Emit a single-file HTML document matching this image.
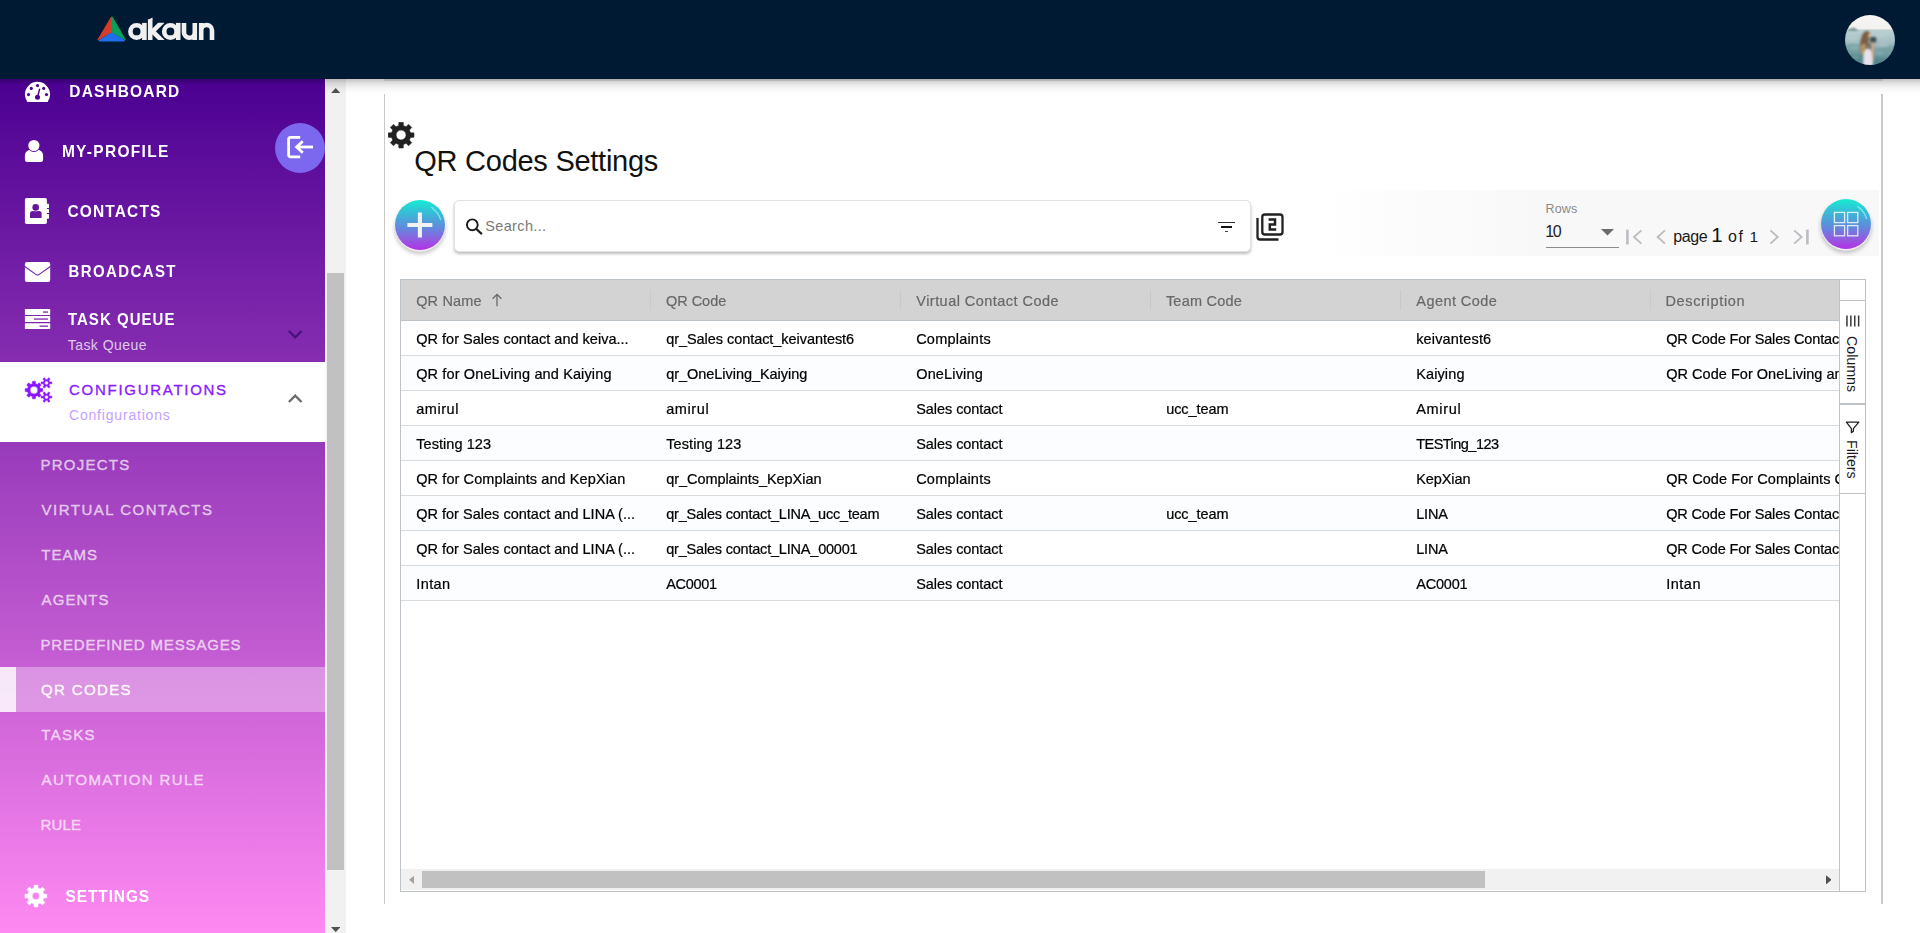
<!DOCTYPE html>
<html>
<head>
<meta charset="utf-8">
<title>QR Codes Settings</title>
<style>
*{box-sizing:border-box;margin:0;padding:0}
html,body{width:1920px;height:933px;overflow:hidden;background:#fff;font-family:"Liberation Sans",sans-serif;}
.abs{position:absolute}
.t{position:absolute;white-space:nowrap;line-height:1}
#hdr{position:absolute;left:0;top:0;width:1920px;height:79px;background:#011a34}
#side{position:absolute;left:0;top:79px;width:325px;height:854px;background:linear-gradient(180deg,#4b0091 0%,#fe89f2 100%)}
#sbar{position:absolute;left:325px;top:79px;width:21px;height:854px;background:#f1f1f1}
.cell{position:absolute;white-space:nowrap;line-height:1;font-size:14.5px;color:#000}
</style>
</head>
<body>

<div id="hdr">
  <svg class="abs" style="left:96px;top:14px" width="32" height="30" viewBox="0 0 32 30">
    <path d="M15.4 3.2 L2.2 25.6 L15.4 18.2 Z" fill="#d63c2a" stroke="#d63c2a" stroke-width="1.2" stroke-linejoin="round"/>
    <path d="M16.2 3.2 L29 25.6 L16.2 18.2 Z" fill="#0aa25a" stroke="#0aa25a" stroke-width="1.2" stroke-linejoin="round"/>
    <path d="M15.8 19.2 L3.4 26.6 L28 26.6 Z" fill="#1e6fea" stroke="#1e6fea" stroke-width="1.6" stroke-linejoin="round"/>
  </svg>
  <svg class="abs" style="left:128px;top:16px" width="90" height="26" viewBox="0 0 90 26" fill="none" stroke="#f0f0f0" stroke-width="4.6">
    <circle cx="8.6" cy="15.4" r="6.2"/><path d="M16.4 6.9 V24"/>
    <path d="M22.2 24 V3.4"/><path d="M19.9 4 L24.5 1.6 V4 Z" fill="#f0f0f0" stroke="none"/><clipPath id="kclip"><rect x="18" y="6.75" width="20" height="17.2"/></clipPath><path clip-path="url(#kclip)" d="M35 5.2 L24.6 15.4 L35.4 26"/>
    <circle cx="42.4" cy="15.4" r="6.2"/><path d="M50.2 6.9 V24"/>
    <path d="M56 6.9 V16.4 a5.4 5.4 0 0 0 10.8 0 V6.9 M66.8 14 V24"/>
    <path d="M73.2 24 V6.9 M73.2 14.4 a5.4 5.4 0 0 1 10.8 0 V24"/>
  </svg>
  <svg class="abs" style="left:1845px;top:15px" width="50" height="50" viewBox="0 0 50 50">
    <defs>
      <clipPath id="avc"><circle cx="25" cy="25" r="25"/></clipPath>
      <linearGradient id="avsky" x1="0" y1="0" x2="0" y2="1"><stop offset="0" stop-color="#f8f7f5"/><stop offset=".27" stop-color="#f3f1ee"/><stop offset=".305" stop-color="#bcd0d2"/><stop offset=".5" stop-color="#a9c2c6"/><stop offset=".75" stop-color="#8fb0b4"/><stop offset="1" stop-color="#6b989c"/></linearGradient>
      <filter id="avb" x="-20%" y="-20%" width="140%" height="140%"><feGaussianBlur stdDeviation=".7"/></filter>
    </defs>
    <g clip-path="url(#avc)">
      <rect width="50" height="50" fill="url(#avsky)"/>
      <g style="filter:blur(0.8px)">
        <path d="M-2 30 Q10 27 22 31 T52 29 V52 H-2 Z" fill="rgba(70,125,130,.35)"/>
        <path d="M-2 40 Q14 37 26 41 T52 39 V52 H-2 Z" fill="rgba(60,115,120,.35)"/>
        <path d="M3 24 h7 M30 21 h9 M34 30 h8 M6 33 h8 M31 38 h7 M8 42 h6" stroke="rgba(235,245,245,.35)" stroke-width="1" fill="none"/>
        <path d="M2.2 15.4 Q3.6 13.4 6.4 13.8 Q8.6 12.4 10.6 13.7 L13.2 15.5 Z" fill="#5f7b7b"/>
        <path d="M15.2 37 Q14.4 28 16.6 21.5 Q18.4 16 21.6 15.9 Q24.8 16.2 25.2 19 L24 24 Q23.4 30 22.6 36 Q20 40.4 17 39.6 Z" fill="#7a5f45"/>
        <path d="M15.4 31 Q15.6 36 15.8 38.6 Q18 40.4 20.6 39 L21 30 Q18 27 15.4 31 Z" fill="#b3946a"/>
        <ellipse cx="24.7" cy="20.4" rx="1.6" ry="2.2" fill="#d6b59c"/>
        <rect x="25" y="22" width="6.3" height="5.6" rx="1.5" fill="#3d4c52"/>
        <path d="M25.6 27.2 L29.6 27.4 L29.2 36 Q28.8 42 28.6 46 L25.6 46 Z" fill="#c6a48e"/>
        <rect x="24" y="28" width="1.7" height="8.6" fill="#52625f"/>
        <path d="M18.2 51 L18.4 40 Q19 34.6 22.4 33.5 L25.2 34.2 Q27 37 27.2 41 L28.2 51 Z" fill="#e7e2eb"/>
      </g>
    </g>
  </svg>
</div>

<div id="side">
<div class="abs" style="left:0;top:0;width:325px;height:6px;background:linear-gradient(180deg,rgba(0,0,0,.25),rgba(0,0,0,0))"></div>
<div class="abs" style="left:0;top:283px;width:325px;height:80px;background:#fff"></div>
<div class="abs" style="left:0;top:588px;width:325px;height:45px;background:rgba(255,255,255,.33)"></div>
<div class="abs" style="left:0;top:588px;width:16px;height:45px;background:rgba(255,255,255,.78)"></div>
</div>
<span class="t" style="left:69.30px;top:84px;font-size:15.5px;letter-spacing:1.143px;color:#fff;font-weight:bold;transform:scaleY(1.06);transform-origin:0 13px;">DASHBOARD</span>
<span class="t" style="left:61.90px;top:144px;font-size:15.5px;letter-spacing:1.290px;color:#fff;font-weight:bold;transform:scaleY(1.06);transform-origin:0 13px;">MY-PROFILE</span>
<span class="t" style="left:67.40px;top:204px;font-size:15.5px;letter-spacing:1.155px;color:#fff;font-weight:bold;transform:scaleY(1.06);transform-origin:0 13px;">CONTACTS</span>
<span class="t" style="left:68.50px;top:264px;font-size:15px;letter-spacing:1.392px;color:#fff;font-weight:bold;transform:scaleY(1.06);transform-origin:0 13px;">BROADCAST</span>
<span class="t" style="left:67.90px;top:312px;font-size:15px;letter-spacing:1.042px;color:#fff;font-weight:bold;transform:scaleY(1.06);transform-origin:0 13px;">TASK QUEUE</span>
<span class="t" style="left:67.70px;top:338px;font-size:14px;letter-spacing:0.464px;color:rgba(255,255,255,.76);font-weight:normal;">Task Queue</span>
<span class="t" style="left:69.00px;top:382px;font-size:15px;letter-spacing:1.722px;color:#8a1cff;font-weight:normal;-webkit-text-stroke:.35px #8a1cff;">CONFIGURATIONS</span>
<span class="t" style="left:69.00px;top:408px;font-size:14px;letter-spacing:0.810px;color:#c6a0ff;font-weight:normal;">Configurations</span>
<span class="t" style="left:40.40px;top:457px;font-size:15px;letter-spacing:1.271px;color:rgba(255,255,255,.64);font-weight:normal;-webkit-text-stroke:.4px rgba(255,255,255,.64);">PROJECTS</span>
<span class="t" style="left:41.60px;top:502px;font-size:15px;letter-spacing:1.485px;color:rgba(255,255,255,.64);font-weight:normal;-webkit-text-stroke:.4px rgba(255,255,255,.64);">VIRTUAL CONTACTS</span>
<span class="t" style="left:41.30px;top:547px;font-size:15px;letter-spacing:1.033px;color:rgba(255,255,255,.64);font-weight:normal;-webkit-text-stroke:.4px rgba(255,255,255,.64);">TEAMS</span>
<span class="t" style="left:41.60px;top:592px;font-size:15px;letter-spacing:1.066px;color:rgba(255,255,255,.64);font-weight:normal;-webkit-text-stroke:.4px rgba(255,255,255,.64);">AGENTS</span>
<span class="t" style="left:40.40px;top:637px;font-size:15px;letter-spacing:0.843px;color:rgba(255,255,255,.64);font-weight:normal;-webkit-text-stroke:.4px rgba(255,255,255,.64);">PREDEFINED MESSAGES</span>
<span class="t" style="left:40.90px;top:682px;font-size:15px;letter-spacing:1.385px;color:rgba(255,255,255,.95);font-weight:normal;-webkit-text-stroke:.4px rgba(255,255,255,.95);">QR CODES</span>
<span class="t" style="left:41.30px;top:727px;font-size:15px;letter-spacing:1.309px;color:rgba(255,255,255,.64);font-weight:normal;-webkit-text-stroke:.4px rgba(255,255,255,.64);">TASKS</span>
<span class="t" style="left:41.60px;top:772px;font-size:15px;letter-spacing:1.372px;color:rgba(255,255,255,.64);font-weight:normal;-webkit-text-stroke:.4px rgba(255,255,255,.64);">AUTOMATION RULE</span>
<span class="t" style="left:40.40px;top:817px;font-size:15px;letter-spacing:0.231px;color:rgba(255,255,255,.64);font-weight:normal;-webkit-text-stroke:.4px rgba(255,255,255,.64);">RULE</span>
<span class="t" style="left:65.60px;top:889px;font-size:15.5px;letter-spacing:0.862px;color:#fff;font-weight:bold;transform:scaleY(1.06);transform-origin:0 13px;">SETTINGS</span>
<svg class="abs" style="left:24px;top:81px" width="28" height="22" viewBox="0 0 28 22">
<mask id="mdash"><rect width="28" height="22" fill="#000"/><path d="M3.4 21 A12.6 12.6 0 1 1 23.6 21 Z" fill="#fff"/>
<circle cx="13.5" cy="4.6" r="1.55" fill="#000"/><circle cx="7.3" cy="7.4" r="1.55" fill="#000"/><circle cx="19.7" cy="7.4" r="1.55" fill="#000"/><circle cx="4.5" cy="13.6" r="1.55" fill="#000"/><circle cx="22.5" cy="13.6" r="1.55" fill="#000"/>
<circle cx="13.5" cy="16.3" r="2.5" fill="#000"/><path d="M13.5 16.3 L15.6 8.2" stroke="#000" stroke-width="1.4" stroke-linecap="round"/></mask>
<rect width="28" height="22" fill="#fff" mask="url(#mdash)"/></svg>
<svg class="abs" style="left:24px;top:139px" width="21" height="24" viewBox="0 0 21 24">
<mask id="muser"><rect width="21" height="24" fill="#000"/><path d="M0.9 20.5 V16.3 A5.5 5.5 0 0 1 6.4 10.8 H13.6 A5.5 5.5 0 0 1 19.1 16.3 V20.5 A2.5 2.5 0 0 1 16.6 23 H3.4 A2.5 2.5 0 0 1 0.9 20.5 Z" fill="#fff"/><circle cx="9.9" cy="6.5" r="6.5" fill="#000"/><circle cx="9.9" cy="6.5" r="5.6" fill="#fff"/></mask>
<rect width="21" height="24" fill="#fff" mask="url(#muser)"/></svg>
<svg class="abs" style="left:24px;top:197px" width="26" height="28" viewBox="0 0 26 28">
<mask id="mbook"><rect width="26" height="28" fill="#000"/><rect x="0.9" y="1.1" width="22" height="25.9" rx="1.7" fill="#fff"/>
<rect x="22" y="6.8" width="3" height="4.3" rx=".6" fill="#fff"/><rect x="22" y="11.9" width="3" height="4.2" rx=".6" fill="#fff"/><rect x="22" y="16.9" width="3" height="4.9" rx=".6" fill="#fff"/>
<path d="M6 20.9 V16.6 A2.5 2.5 0 0 1 8.5 14.1 H15.1 A2.5 2.5 0 0 1 17.6 16.6 V20.9 Z" fill="#000"/><circle cx="11.7" cy="10.4" r="3.9" fill="#fff"/><circle cx="11.7" cy="10.4" r="3.3" fill="#000"/></mask>
<rect width="26" height="28" fill="#fff" mask="url(#mbook)"/></svg>
<svg class="abs" style="left:24px;top:261px" width="27" height="22" viewBox="0 0 27 22">
<mask id="menv"><rect width="27" height="22" fill="#000"/><rect x="0.9" y="0.9" width="25.3" height="20.1" rx="2" fill="#fff"/><path d="M0.4 5.2 L12.2 13.6 Q13.5 14.5 14.8 13.6 L26.7 5.2" fill="none" stroke="#000" stroke-width="1.1"/></mask>
<rect width="27" height="22" fill="#fff" mask="url(#menv)"/></svg>
<svg class="abs" style="left:24px;top:308px" width="27" height="22" viewBox="0 0 27 22">
<mask id="msrv"><rect width="27" height="22" fill="#000"/><rect x="0.9" y="1.1" width="25.3" height="5.8" rx=".5" fill="#fff"/><rect x="0.9" y="8.1" width="25.3" height="5.9" rx=".5" fill="#fff"/><rect x="0.9" y="15.2" width="25.3" height="5.9" rx=".5" fill="#fff"/>
<rect x="19" y="3.4" width="5" height="1.3" fill="#000"/><rect x="9.9" y="10.4" width="14.1" height="1.3" fill="#000"/><rect x="15.5" y="17.5" width="8.5" height="1.3" fill="#000"/></mask>
<rect width="27" height="22" fill="#fff" mask="url(#msrv)"/></svg>
<svg class="abs" style="left:286px;top:328px" width="18" height="13" viewBox="0 0 18 13"><path d="M2.9 3 L9.2 9.3 L15.5 3" fill="none" stroke="#47127a" stroke-width="2.3"/></svg>
<svg class="abs" style="left:286px;top:392px" width="18" height="13" viewBox="0 0 18 13"><path d="M2.9 10 L9.2 3.7 L15.5 10" fill="none" stroke="#6a6a6a" stroke-width="2.3"/></svg>
<svg class="abs" style="left:24px;top:376px" width="30" height="28" viewBox="0 0 30 28"><path fill="#8a14ff" fill-rule="evenodd" stroke="#8a14ff" stroke-width=".5" stroke-linejoin="round" d="M16.36 12.48 L18.73 12.61 L18.73 15.53 L16.36 15.66 L15.60 17.47 L17.19 19.24 L15.12 21.31 L13.35 19.72 L11.54 20.48 L11.41 22.85 L8.49 22.85 L8.36 20.48 L6.55 19.72 L4.78 21.31 L2.71 19.24 L4.30 17.47 L3.54 15.66 L1.17 15.53 L1.17 12.61 L3.54 12.48 L4.30 10.67 L2.71 8.90 L4.78 6.83 L6.55 8.42 L8.36 7.66 L8.49 5.29 L11.41 5.29 L11.54 7.66 L13.35 8.42 L15.12 6.83 L17.19 8.90 L15.60 10.67 Z M13.85 14.07 A3.9 3.9 0 1 0 6.05 14.07 A3.9 3.9 0 1 0 13.85 14.07 Z M25.66 5.95 L27.91 5.93 L27.91 7.87 L25.66 7.85 L24.91 9.16 L26.05 11.10 L24.36 12.07 L23.25 10.11 L21.75 10.11 L20.64 12.07 L18.95 11.10 L20.09 9.16 L19.34 7.85 L17.09 7.87 L17.09 5.93 L19.34 5.95 L20.09 4.64 L18.95 2.70 L20.64 1.73 L21.75 3.69 L23.25 3.69 L24.36 1.73 L26.05 2.70 L24.91 4.64 Z M24.40 6.90 A1.9 1.9 0 1 0 20.60 6.90 A1.9 1.9 0 1 0 24.40 6.90 Z M25.66 20.15 L27.91 20.13 L27.91 22.07 L25.66 22.05 L24.91 23.36 L26.05 25.30 L24.36 26.27 L23.25 24.31 L21.75 24.31 L20.64 26.27 L18.95 25.30 L20.09 23.36 L19.34 22.05 L17.09 22.07 L17.09 20.13 L19.34 20.15 L20.09 18.84 L18.95 16.90 L20.64 15.93 L21.75 17.89 L23.25 17.89 L24.36 15.93 L26.05 16.90 L24.91 18.84 Z M24.40 21.10 A1.9 1.9 0 1 0 20.60 21.10 A1.9 1.9 0 1 0 24.40 21.10 Z"/></svg>
<svg class="abs" style="left:24px;top:884px" width="24" height="24" viewBox="0 0 24 24"><path fill="#fff" fill-rule="evenodd" stroke="#fff" stroke-width=".5" stroke-linejoin="round" d="M19.86 10.07 L22.85 10.23 L22.85 13.87 L19.86 14.03 L18.93 16.28 L20.93 18.50 L18.35 21.08 L16.13 19.08 L13.88 20.01 L13.72 23.00 L10.08 23.00 L9.92 20.01 L7.67 19.08 L5.45 21.08 L2.87 18.50 L4.87 16.28 L3.94 14.03 L0.95 13.87 L0.95 10.23 L3.94 10.07 L4.87 7.82 L2.87 5.60 L5.45 3.02 L7.67 5.02 L9.92 4.09 L10.08 1.10 L13.72 1.10 L13.88 4.09 L16.13 5.02 L18.35 3.02 L20.93 5.60 L18.93 7.82 Z M15.60 12.05 A3.7 3.7 0 1 0 8.20 12.05 A3.7 3.7 0 1 0 15.60 12.05 Z"/></svg>
<div class="abs" style="left:275px;top:123px;width:50px;height:50px;border-radius:50%;background:#7b68ee"></div>
<svg class="abs" style="left:275px;top:123px" width="50" height="50" viewBox="0 0 50 50" fill="none" stroke="#fff" stroke-width="2.8">
<path d="M25.2 14.3 H15.6 Q13.6 14.3 13.6 16.3 V31.8 Q13.6 33.8 15.6 33.8 H25.2" stroke-linecap="butt"/>
<path d="M38 24 H21.5"/><path d="M27.8 18.2 L21.6 24 L27.8 29.8"/></svg>
<div id="sbar">
  <div class="abs" style="left:0;top:0;width:1px;height:854px;background:#fbfbfb"></div>
  <div class="abs" style="left:2px;top:194px;width:17px;height:597px;background:#c1c1c1"></div>
  <svg class="abs" style="left:5.8px;top:8.8px" width="9.4" height="5.2" viewBox="0 0 11 6"><path d="M0 6 L5.5 0 L11 6 Z" fill="#505050"/></svg>
  <svg class="abs" style="left:5.8px;top:848px" width="9.4" height="5.2" viewBox="0 0 11 6"><path d="M0 0 L5.5 6 L11 0 Z" fill="#505050"/></svg>
</div>

<div class="abs" style="left:325px;top:79px;width:1595px;height:15px;background:linear-gradient(180deg,rgba(0,0,0,.24) 0,rgba(0,0,0,.12) 4px,rgba(0,0,0,.04) 9px,rgba(0,0,0,0) 15px)"></div>
<div class="abs" style="left:384px;top:79px;width:1499px;height:2px;background:rgba(0,0,0,.1)"></div>
<div class="abs" style="left:384px;top:94px;width:1px;height:810px;background:#c9c9c9"></div>
<div class="abs" style="left:1881px;top:94px;width:2px;height:810px;background:#c9c9c9"></div>
<svg class="abs" style="left:388px;top:122px" width="27" height="27" viewBox="0 0 27 27"><path fill="#212121" fill-rule="evenodd" stroke="#212121" stroke-width=".6" stroke-linejoin="round" d="M22.46 10.71 L25.97 10.90 L25.97 15.20 L22.46 15.39 L21.36 18.05 L23.71 20.67 L20.67 23.71 L18.05 21.36 L15.39 22.46 L15.20 25.97 L10.90 25.97 L10.71 22.46 L8.05 21.36 L5.43 23.71 L2.39 20.67 L4.74 18.05 L3.64 15.39 L0.13 15.20 L0.13 10.90 L3.64 10.71 L4.74 8.05 L2.39 5.43 L5.43 2.39 L8.05 4.74 L10.71 3.64 L10.90 0.13 L15.20 0.13 L15.39 3.64 L18.05 4.74 L20.67 2.39 L23.71 5.43 L21.36 8.05 Z M18.05 13.05 A5.0 5.0 0 1 0 8.05 13.05 A5.0 5.0 0 1 0 18.05 13.05 Z"/></svg>
<span class="t" style="left:414.34px;top:147px;font-size:29px;letter-spacing:-0.266px;color:#111;font-weight:normal;">QR Codes Settings</span>
<div class="abs" style="left:1315px;top:190px;width:564px;height:66px;background:linear-gradient(90deg,rgba(248,248,248,0) 0,#f8f8f8 220px)"></div>
<div class="abs" style="left:395px;top:200px;width:50px;height:50px;border-radius:50%;background:linear-gradient(180deg,#14ecd2 0%,#3fb4d8 30%,#5f8bdc 55%,#8f5fe0 78%,#b42fe6 100%);box-shadow:0 1.4px 0 .4px #f3ecf6,0 3.5px 4px .5px rgba(0,0,0,.23)"></div><svg class="abs" style="left:395px;top:200px" width="50" height="50" viewBox="0 0 50 50"><path d="M36.8 7.6 Q43.6 12.6 45.6 19.6" fill="none" stroke="rgba(140,250,245,.7)" stroke-width="1.4" stroke-linecap="round"/></svg>
<svg class="abs" style="left:395px;top:200px" width="50" height="50" viewBox="0 0 50 50"><path d="M12.4 25 H37.4 M24.9 12.4 V37.6" stroke="#f2f2f2" stroke-width="4.1" fill="none"/></svg>
<div class="abs" style="left:453.5px;top:199.5px;width:797px;height:52px;border-radius:5px;background:#fff;border:1px solid #e2e2e2;box-shadow:0 2px 3px rgba(0,0,0,.26)"></div>
<svg class="abs" style="left:463px;top:215px" width="22" height="22" viewBox="0 0 22 22" fill="none" stroke="#1c1c1c"><circle cx="9.3" cy="9.8" r="5.4" stroke-width="1.9"/><path d="M13.2 13.9 L18.9 19.1" stroke-width="2.1"/></svg>
<span class="t" style="left:485.20px;top:219px;font-size:14.5px;letter-spacing:0.363px;color:#7a7a7a;font-weight:normal;">Search...</span>
<div class="abs" style="left:1218px;top:221.6px;width:17px;height:1.6px;background:#333"></div>
<div class="abs" style="left:1221px;top:226.2px;width:11px;height:1.7px;background:#111"></div>
<div class="abs" style="left:1224.8px;top:230.9px;width:3.5px;height:1.6px;background:#444"></div>
<svg class="abs" style="left:1254px;top:211px" width="32" height="32" viewBox="0 0 32 32" fill="none" stroke="#212121" stroke-width="2.3">
<rect x="8.3" y="3.5" width="20.2" height="20" rx="2.6"/>
<path d="M3.5 7 V26 Q3.5 28.5 6 28.5 H24.5"/>
<path d="M14.6 8.4 H21 V13.6 H15.8 V18.6 H22.2" stroke-width="2.5"/></svg>
<span class="t" style="left:1545.40px;top:203px;font-size:12.5px;letter-spacing:0.231px;color:#8a8a8a;font-weight:normal;">Rows</span>
<span class="t" style="left:1545.20px;top:224px;font-size:16px;letter-spacing:-1.398px;color:#222;font-weight:normal;">10</span>
<svg class="abs" style="left:1601px;top:229px" width="13" height="7" viewBox="0 0 13 7"><path d="M0 0 H13 L6.5 6.6 Z" fill="#6a6a6a"/></svg>
<div class="abs" style="left:1546px;top:247px;width:73px;height:1px;background:#8c8c8c"></div>
<svg class="abs" style="left:1624px;top:227px" width="190" height="20" viewBox="0 0 190 20" fill="none" stroke="#bcbcc2" stroke-width="1.9"><path d="M3.4 2.6 V17.4" stroke-width="2.6"/><path d="M17.4 3.4 L10 10 L17.4 16.6"/><path d="M41 3.4 L33.6 10 L41 16.6"/><path d="M146.4 3.4 L153.8 10 L146.4 16.6"/><path d="M170.2 3.4 L177.6 10 L170.2 16.6"/><path d="M183.4 2.6 V17.4" stroke-width="2.6"/></svg>
<span class="t" style="left:1673.20px;top:229px;font-size:16px;letter-spacing:-0.365px;color:#1a1a1a;font-weight:normal;">page</span>
<span class="t" style="left:1711.20px;top:225px;font-size:20.5px;letter-spacing:0.000px;color:#111;font-weight:normal;">1</span>
<span class="t" style="left:1728.00px;top:229px;font-size:16px;letter-spacing:1.502px;color:#1a1a1a;font-weight:normal;">of</span>
<span class="t" style="left:1749.60px;top:229px;font-size:15.5px;letter-spacing:0.000px;color:#1a1a1a;font-weight:normal;">1</span>
<div class="abs" style="left:1821px;top:199px;width:50px;height:50px;border-radius:50%;background:linear-gradient(180deg,#14ecd2 0%,#3fb4d8 30%,#5f8bdc 55%,#8f5fe0 78%,#b42fe6 100%);box-shadow:0 1.4px 0 .4px #f3ecf6,0 3.5px 4px .5px rgba(0,0,0,.23)"></div><svg class="abs" style="left:1821px;top:199px" width="50" height="50" viewBox="0 0 50 50"><path d="M36.8 7.6 Q43.6 12.6 45.6 19.6" fill="none" stroke="rgba(140,250,245,.7)" stroke-width="1.4" stroke-linecap="round"/></svg>
<svg class="abs" style="left:1821px;top:199px" width="50" height="50" viewBox="0 0 50 50" fill="none" stroke="rgba(255,255,255,.82)" stroke-width="1.3"><rect x="13.4" y="13.4" width="10.2" height="10.2"/><rect x="26.6" y="13.4" width="10.2" height="10.2"/><rect x="13.4" y="26.6" width="10.2" height="10.2"/><rect x="26.6" y="26.6" width="10.2" height="10.2"/></svg>
<div class="abs" style="left:400px;top:279px;width:1466px;height:613px;border:1px solid #bdc3c7;background:#fff"></div>
<div class="abs" style="left:401px;top:280px;width:1438px;height:41px;background:#d3d3d3;border-bottom:1px solid #bdc3c7"></div>
<div class="abs" style="left:401px;top:321px;width:1438px;height:35px;background:#fff;border-bottom:1px solid #d9dcde"></div>
<div class="abs" style="left:401px;top:356px;width:1438px;height:35px;background:#fcfdfe;border-bottom:1px solid #d9dcde"></div>
<div class="abs" style="left:401px;top:391px;width:1438px;height:35px;background:#fff;border-bottom:1px solid #d9dcde"></div>
<div class="abs" style="left:401px;top:426px;width:1438px;height:35px;background:#fcfdfe;border-bottom:1px solid #d9dcde"></div>
<div class="abs" style="left:401px;top:461px;width:1438px;height:35px;background:#fff;border-bottom:1px solid #d9dcde"></div>
<div class="abs" style="left:401px;top:496px;width:1438px;height:35px;background:#fcfdfe;border-bottom:1px solid #d9dcde"></div>
<div class="abs" style="left:401px;top:531px;width:1438px;height:35px;background:#fff;border-bottom:1px solid #d9dcde"></div>
<div class="abs" style="left:401px;top:566px;width:1438px;height:35px;background:#fcfdfe;border-bottom:1px solid #d9dcde"></div>
<div class="abs" style="left:650px;top:290px;width:1px;height:20px;background:rgba(189,195,199,.55)"></div>
<div class="abs" style="left:900px;top:290px;width:1px;height:20px;background:rgba(189,195,199,.55)"></div>
<div class="abs" style="left:1150px;top:290px;width:1px;height:20px;background:rgba(189,195,199,.55)"></div>
<div class="abs" style="left:1400px;top:290px;width:1px;height:20px;background:rgba(189,195,199,.55)"></div>
<div class="abs" style="left:1650px;top:290px;width:1px;height:20px;background:rgba(189,195,199,.55)"></div>
<span class="t" style="left:416.20px;top:294px;font-size:14.5px;letter-spacing:0.151px;color:#686868;font-weight:normal;transform:scaleY(1.07);transform-origin:0 12px;-webkit-text-stroke:.2px #686868;">QR Name</span>
<span class="t" style="left:665.90px;top:294px;font-size:14.5px;letter-spacing:-0.013px;color:#686868;font-weight:normal;transform:scaleY(1.07);transform-origin:0 12px;-webkit-text-stroke:.2px #686868;">QR Code</span>
<span class="t" style="left:916.30px;top:294px;font-size:14.5px;letter-spacing:0.460px;color:#686868;font-weight:normal;transform:scaleY(1.07);transform-origin:0 12px;-webkit-text-stroke:.2px #686868;">Virtual Contact Code</span>
<span class="t" style="left:1165.90px;top:294px;font-size:14.5px;letter-spacing:0.214px;color:#686868;font-weight:normal;transform:scaleY(1.07);transform-origin:0 12px;-webkit-text-stroke:.2px #686868;">Team Code</span>
<span class="t" style="left:1416.30px;top:294px;font-size:14.5px;letter-spacing:0.431px;color:#686868;font-weight:normal;transform:scaleY(1.07);transform-origin:0 12px;-webkit-text-stroke:.2px #686868;">Agent Code</span>
<span class="t" style="left:1665.40px;top:294px;font-size:14.5px;letter-spacing:0.674px;color:#686868;font-weight:normal;transform:scaleY(1.07);transform-origin:0 12px;-webkit-text-stroke:.2px #686868;">Description</span>
<svg class="abs" style="left:490.6px;top:293px" width="12" height="14" viewBox="0 0 12 14" fill="none" stroke="#686868" stroke-width="1.3"><path d="M6 13.2 V1.6 M1.6 5.8 L6 1.4 L10.4 5.8"/></svg>
<div class="abs" style="left:401px;top:321px;width:1438px;height:290px;overflow:hidden">
<div class="abs" style="left:-401px;top:-321px"><span class="t" style="left:416.20px;top:332px;font-size:14.5px;letter-spacing:0.015px;color:#000;font-weight:normal;transform:scaleY(1.07);transform-origin:0 12px;-webkit-text-stroke:.22px #000;">QR for Sales contact and keiva...</span></div>
<div class="abs" style="left:-401px;top:-321px"><span class="t" style="left:666.20px;top:332px;font-size:14.5px;letter-spacing:-0.054px;color:#000;font-weight:normal;transform:scaleY(1.07);transform-origin:0 12px;-webkit-text-stroke:.22px #000;">qr_Sales contact_keivantest6</span></div>
<div class="abs" style="left:-401px;top:-321px"><span class="t" style="left:916.20px;top:332px;font-size:14.5px;letter-spacing:0.214px;color:#000;font-weight:normal;transform:scaleY(1.07);transform-origin:0 12px;-webkit-text-stroke:.22px #000;">Complaints</span></div>
<div class="abs" style="left:-401px;top:-321px"><span class="t" style="left:1416.20px;top:332px;font-size:14.5px;letter-spacing:0.161px;color:#000;font-weight:normal;transform:scaleY(1.07);transform-origin:0 12px;-webkit-text-stroke:.22px #000;">keivantest6</span></div>
<div class="abs" style="left:-401px;top:-321px"><span class="t" style="left:1666.20px;top:332px;font-size:14.5px;letter-spacing:0.000px;color:#000;font-weight:normal;letter-spacing:-0.15px;transform:scaleY(1.07);transform-origin:0 12px;-webkit-text-stroke:.22px #000;">QR Code For Sales Contact and keivantest6</span></div>
<div class="abs" style="left:-401px;top:-321px"><span class="t" style="left:416.20px;top:367px;font-size:14.5px;letter-spacing:0.127px;color:#000;font-weight:normal;transform:scaleY(1.07);transform-origin:0 12px;-webkit-text-stroke:.22px #000;">QR for OneLiving and Kaiying</span></div>
<div class="abs" style="left:-401px;top:-321px"><span class="t" style="left:666.20px;top:367px;font-size:14.5px;letter-spacing:-0.042px;color:#000;font-weight:normal;transform:scaleY(1.07);transform-origin:0 12px;-webkit-text-stroke:.22px #000;">qr_OneLiving_Kaiying</span></div>
<div class="abs" style="left:-401px;top:-321px"><span class="t" style="left:916.20px;top:367px;font-size:14.5px;letter-spacing:0.159px;color:#000;font-weight:normal;transform:scaleY(1.07);transform-origin:0 12px;-webkit-text-stroke:.22px #000;">OneLiving</span></div>
<div class="abs" style="left:-401px;top:-321px"><span class="t" style="left:1416.20px;top:367px;font-size:14.5px;letter-spacing:0.118px;color:#000;font-weight:normal;transform:scaleY(1.07);transform-origin:0 12px;-webkit-text-stroke:.22px #000;">Kaiying</span></div>
<div class="abs" style="left:-401px;top:-321px"><span class="t" style="left:1666.20px;top:367px;font-size:14.5px;letter-spacing:0.000px;color:#000;font-weight:normal;letter-spacing:0.03px;transform:scaleY(1.07);transform-origin:0 12px;-webkit-text-stroke:.22px #000;">QR Code For OneLiving and Kaiying</span></div>
<div class="abs" style="left:-401px;top:-321px"><span class="t" style="left:416.20px;top:402px;font-size:14.5px;letter-spacing:0.549px;color:#000;font-weight:normal;transform:scaleY(1.07);transform-origin:0 12px;-webkit-text-stroke:.22px #000;">amirul</span></div>
<div class="abs" style="left:-401px;top:-321px"><span class="t" style="left:666.20px;top:402px;font-size:14.5px;letter-spacing:0.589px;color:#000;font-weight:normal;transform:scaleY(1.07);transform-origin:0 12px;-webkit-text-stroke:.22px #000;">amirul</span></div>
<div class="abs" style="left:-401px;top:-321px"><span class="t" style="left:916.20px;top:402px;font-size:14.5px;letter-spacing:-0.060px;color:#000;font-weight:normal;transform:scaleY(1.07);transform-origin:0 12px;-webkit-text-stroke:.22px #000;">Sales contact</span></div>
<div class="abs" style="left:-401px;top:-321px"><span class="t" style="left:1166.20px;top:402px;font-size:14.5px;letter-spacing:-0.069px;color:#000;font-weight:normal;transform:scaleY(1.07);transform-origin:0 12px;-webkit-text-stroke:.22px #000;">ucc_team</span></div>
<div class="abs" style="left:-401px;top:-321px"><span class="t" style="left:1416.20px;top:402px;font-size:14.5px;letter-spacing:0.707px;color:#000;font-weight:normal;transform:scaleY(1.07);transform-origin:0 12px;-webkit-text-stroke:.22px #000;">Amirul</span></div>
<div class="abs" style="left:-401px;top:-321px"><span class="t" style="left:416.20px;top:437px;font-size:14.5px;letter-spacing:0.070px;color:#000;font-weight:normal;transform:scaleY(1.07);transform-origin:0 12px;-webkit-text-stroke:.22px #000;">Testing 123</span></div>
<div class="abs" style="left:-401px;top:-321px"><span class="t" style="left:666.20px;top:437px;font-size:14.5px;letter-spacing:0.090px;color:#000;font-weight:normal;transform:scaleY(1.07);transform-origin:0 12px;-webkit-text-stroke:.22px #000;">Testing 123</span></div>
<div class="abs" style="left:-401px;top:-321px"><span class="t" style="left:916.20px;top:437px;font-size:14.5px;letter-spacing:-0.060px;color:#000;font-weight:normal;transform:scaleY(1.07);transform-origin:0 12px;-webkit-text-stroke:.22px #000;">Sales contact</span></div>
<div class="abs" style="left:-401px;top:-321px"><span class="t" style="left:1416.20px;top:437px;font-size:14.5px;letter-spacing:-0.526px;color:#000;font-weight:normal;transform:scaleY(1.07);transform-origin:0 12px;-webkit-text-stroke:.22px #000;">TESTing_123</span></div>
<div class="abs" style="left:-401px;top:-321px"><span class="t" style="left:416.20px;top:472px;font-size:14.5px;letter-spacing:0.098px;color:#000;font-weight:normal;transform:scaleY(1.07);transform-origin:0 12px;-webkit-text-stroke:.22px #000;">QR for Complaints and KepXian</span></div>
<div class="abs" style="left:-401px;top:-321px"><span class="t" style="left:666.20px;top:472px;font-size:14.5px;letter-spacing:-0.055px;color:#000;font-weight:normal;transform:scaleY(1.07);transform-origin:0 12px;-webkit-text-stroke:.22px #000;">qr_Complaints_KepXian</span></div>
<div class="abs" style="left:-401px;top:-321px"><span class="t" style="left:916.20px;top:472px;font-size:14.5px;letter-spacing:0.214px;color:#000;font-weight:normal;transform:scaleY(1.07);transform-origin:0 12px;-webkit-text-stroke:.22px #000;">Complaints</span></div>
<div class="abs" style="left:-401px;top:-321px"><span class="t" style="left:1416.20px;top:472px;font-size:14.5px;letter-spacing:-0.093px;color:#000;font-weight:normal;transform:scaleY(1.07);transform-origin:0 12px;-webkit-text-stroke:.22px #000;">KepXian</span></div>
<div class="abs" style="left:-401px;top:-321px"><span class="t" style="left:1666.20px;top:472px;font-size:14.5px;letter-spacing:0.000px;color:#000;font-weight:normal;letter-spacing:0.07px;transform:scaleY(1.07);transform-origin:0 12px;-webkit-text-stroke:.22px #000;">QR Code For Complaints Contact and KepXian</span></div>
<div class="abs" style="left:-401px;top:-321px"><span class="t" style="left:416.20px;top:507px;font-size:14.5px;letter-spacing:0.013px;color:#000;font-weight:normal;transform:scaleY(1.07);transform-origin:0 12px;-webkit-text-stroke:.22px #000;">QR for Sales contact and LINA (...</span></div>
<div class="abs" style="left:-401px;top:-321px"><span class="t" style="left:666.20px;top:507px;font-size:14.5px;letter-spacing:-0.202px;color:#000;font-weight:normal;transform:scaleY(1.07);transform-origin:0 12px;-webkit-text-stroke:.22px #000;">qr_Sales contact_LINA_ucc_team</span></div>
<div class="abs" style="left:-401px;top:-321px"><span class="t" style="left:916.20px;top:507px;font-size:14.5px;letter-spacing:-0.060px;color:#000;font-weight:normal;transform:scaleY(1.07);transform-origin:0 12px;-webkit-text-stroke:.22px #000;">Sales contact</span></div>
<div class="abs" style="left:-401px;top:-321px"><span class="t" style="left:1166.20px;top:507px;font-size:14.5px;letter-spacing:-0.069px;color:#000;font-weight:normal;transform:scaleY(1.07);transform-origin:0 12px;-webkit-text-stroke:.22px #000;">ucc_team</span></div>
<div class="abs" style="left:-401px;top:-321px"><span class="t" style="left:1416.20px;top:507px;font-size:14.5px;letter-spacing:-0.188px;color:#000;font-weight:normal;transform:scaleY(1.07);transform-origin:0 12px;-webkit-text-stroke:.22px #000;">LINA</span></div>
<div class="abs" style="left:-401px;top:-321px"><span class="t" style="left:1666.20px;top:507px;font-size:14.5px;letter-spacing:0.000px;color:#000;font-weight:normal;letter-spacing:-0.15px;transform:scaleY(1.07);transform-origin:0 12px;-webkit-text-stroke:.22px #000;">QR Code For Sales Contact and LINA</span></div>
<div class="abs" style="left:-401px;top:-321px"><span class="t" style="left:416.20px;top:542px;font-size:14.5px;letter-spacing:0.013px;color:#000;font-weight:normal;transform:scaleY(1.07);transform-origin:0 12px;-webkit-text-stroke:.22px #000;">QR for Sales contact and LINA (...</span></div>
<div class="abs" style="left:-401px;top:-321px"><span class="t" style="left:666.20px;top:542px;font-size:14.5px;letter-spacing:-0.201px;color:#000;font-weight:normal;transform:scaleY(1.07);transform-origin:0 12px;-webkit-text-stroke:.22px #000;">qr_Sales contact_LINA_00001</span></div>
<div class="abs" style="left:-401px;top:-321px"><span class="t" style="left:916.20px;top:542px;font-size:14.5px;letter-spacing:-0.060px;color:#000;font-weight:normal;transform:scaleY(1.07);transform-origin:0 12px;-webkit-text-stroke:.22px #000;">Sales contact</span></div>
<div class="abs" style="left:-401px;top:-321px"><span class="t" style="left:1416.20px;top:542px;font-size:14.5px;letter-spacing:-0.188px;color:#000;font-weight:normal;transform:scaleY(1.07);transform-origin:0 12px;-webkit-text-stroke:.22px #000;">LINA</span></div>
<div class="abs" style="left:-401px;top:-321px"><span class="t" style="left:1666.20px;top:542px;font-size:14.5px;letter-spacing:0.000px;color:#000;font-weight:normal;letter-spacing:-0.15px;transform:scaleY(1.07);transform-origin:0 12px;-webkit-text-stroke:.22px #000;">QR Code For Sales Contact and LINA</span></div>
<div class="abs" style="left:-401px;top:-321px"><span class="t" style="left:416.20px;top:577px;font-size:14.5px;letter-spacing:0.429px;color:#000;font-weight:normal;transform:scaleY(1.07);transform-origin:0 12px;-webkit-text-stroke:.22px #000;">Intan</span></div>
<div class="abs" style="left:-401px;top:-321px"><span class="t" style="left:666.20px;top:577px;font-size:14.5px;letter-spacing:-0.327px;color:#000;font-weight:normal;transform:scaleY(1.07);transform-origin:0 12px;-webkit-text-stroke:.22px #000;">AC0001</span></div>
<div class="abs" style="left:-401px;top:-321px"><span class="t" style="left:916.20px;top:577px;font-size:14.5px;letter-spacing:-0.060px;color:#000;font-weight:normal;transform:scaleY(1.07);transform-origin:0 12px;-webkit-text-stroke:.22px #000;">Sales contact</span></div>
<div class="abs" style="left:-401px;top:-321px"><span class="t" style="left:1416.20px;top:577px;font-size:14.5px;letter-spacing:-0.187px;color:#000;font-weight:normal;transform:scaleY(1.07);transform-origin:0 12px;-webkit-text-stroke:.22px #000;">AC0001</span></div>
<div class="abs" style="left:-401px;top:-321px"><span class="t" style="left:1666.20px;top:577px;font-size:14.5px;letter-spacing:0.504px;color:#000;font-weight:normal;transform:scaleY(1.07);transform-origin:0 12px;-webkit-text-stroke:.22px #000;">Intan</span></div>
</div>
<div class="abs" style="left:1839px;top:280px;width:26px;height:611px;background:#fff;border-left:1px solid #bdc3c7"></div>
<div class="abs" style="left:1839px;top:300px;width:26px;height:104px;border:1px solid #bdc3c7;border-right:none;background:#fff"></div>
<div class="abs" style="left:1839px;top:403px;width:26px;height:91px;border:1px solid #bdc3c7;border-right:none;border-top-width:2px;background:#fff"></div>
<svg class="abs" style="left:1845px;top:315px" width="16" height="12" viewBox="0 0 16 12" fill="#3a3a3a"><rect x="1.2" y=".5" width="1.5" height="11"/><rect x="5.1" y=".5" width="1.5" height="11"/><rect x="9" y=".5" width="1.5" height="11"/><rect x="12.9" y=".5" width="1.5" height="11"/></svg>
<span class="t" style="left:1858.6px;top:335.6px;font-size:14.2px;color:#1a1a1a;transform-origin:0 0;transform:rotate(90deg)">Columns</span>
<svg class="abs" style="left:1844px;top:419px" width="18" height="16" viewBox="0 0 18 16" fill="none" stroke="#222" stroke-width="1.3" stroke-linejoin="round"><path d="M2.4 3.2 H14.8 L9.4 9.6 V12.2 L7.4 13.6 V9.6 Z"/></svg>
<span class="t" style="left:1858.6px;top:440.4px;font-size:14.2px;letter-spacing:0px;color:#1a1a1a;transform-origin:0 0;transform:rotate(90deg)">Filters</span>
<div class="abs" style="left:401px;top:869px;width:1438px;height:21px;background:#f1f1f1"></div>
<div class="abs" style="left:422px;top:871px;width:1063px;height:17px;background:#c1c1c1"></div>
<svg class="abs" style="left:408.6px;top:874.6px" width="5.6" height="9.6" viewBox="0 0 6 10"><path d="M6 0 L0 5 L6 10 Z" fill="#a3a3a3"/></svg>
<svg class="abs" style="left:1825.8px;top:874.6px" width="5.6" height="9.6" viewBox="0 0 6 10"><path d="M0 0 L6 5 L0 10 Z" fill="#505050"/></svg>
</body>
</html>
